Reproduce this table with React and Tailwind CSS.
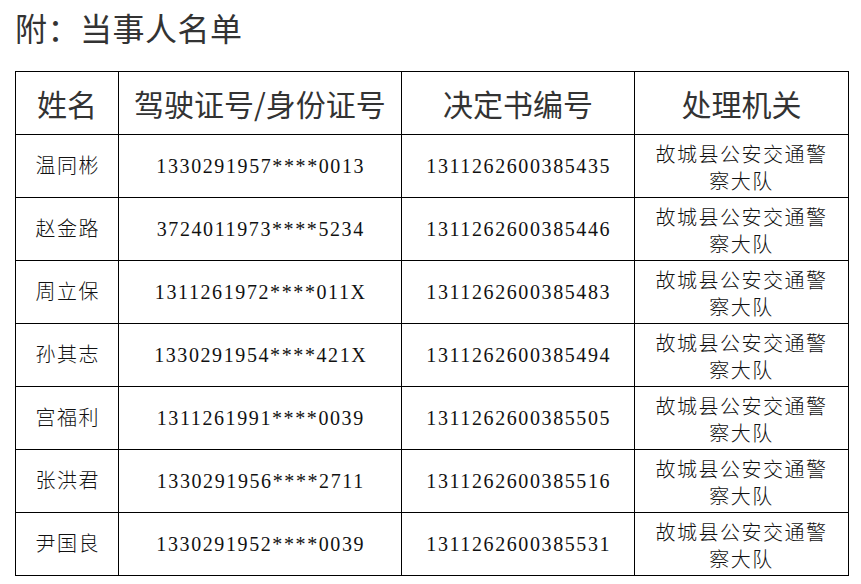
import React from "react";

const rows = [
  ["温同彬", "1330291957****0013", "1311262600385435"],
  ["赵金路", "3724011973****5234", "1311262600385446"],
  ["周立保", "1311261972****011X", "1311262600385483"],
  ["孙其志", "1330291954****421X", "1311262600385494"],
  ["宫福利", "1311261991****0039", "1311262600385505"],
  ["张洪君", "1330291956****2711", "1311262600385516"],
  ["尹国良", "1330291952****0039", "1311262600385531"],
];

export default function App() {
  return (
    <div className="w-[861px] h-[584px] bg-white overflow-hidden">
      <div
        className="pl-[15px] pt-[7px] h-[47px] text-[32px] leading-[40px] tracking-[0.5px] text-[#333333]"
        style={{ fontFamily: '"Noto Sans CJK SC", sans-serif' }}
      >
        附：当事人名单
      </div>
      <div className="pl-[15px] mt-[24px]">
        <table className="border-collapse table-fixed w-[834px]">
          <colgroup>
            <col className="w-[103px]" />
            <col className="w-[283px]" />
            <col className="w-[233px]" />
            <col className="w-[214px]" />
          </colgroup>
          <thead>
            <tr className="h-[63px]">
              {["姓名", "驾驶证号/身份证号", "决定书编号", "处理机关"].map((h) => (
                <th
                  key={h}
                  className="border border-black font-normal text-[30px] leading-[40px] text-[#333333] text-center align-middle p-0"
                  style={{ fontFamily: '"Noto Sans CJK SC", sans-serif' }}
                >
                  {h}
                </th>
              ))}
            </tr>
          </thead>
          <tbody
            className="text-[20px] text-[#111111] font-light"
            style={{ fontFamily: '"Liberation Serif", "Noto Sans CJK SC", serif' }}
          >
            {rows.map((r) => (
              <tr key={r[0]} className="h-[63px]">
                <td className="border border-black text-center align-middle p-0 tracking-[1.5px] pl-[1.5px]">
                  {r[0]}
                </td>
                <td className="border border-black text-center align-middle p-0 tracking-[1.6px] pl-[1.5px]">
                  {r[1]}
                </td>
                <td className="border border-black text-center align-middle p-0 tracking-[1.6px] pl-[1.5px]">
                  {r[2]}
                </td>
                <td className="border border-black text-center align-middle pt-[6px] pb-0 px-[17px] tracking-[1.5px] leading-[27px]">
                  故城县公安交通警察大队
                </td>
              </tr>
            ))}
          </tbody>
        </table>
      </div>
    </div>
  );
}
